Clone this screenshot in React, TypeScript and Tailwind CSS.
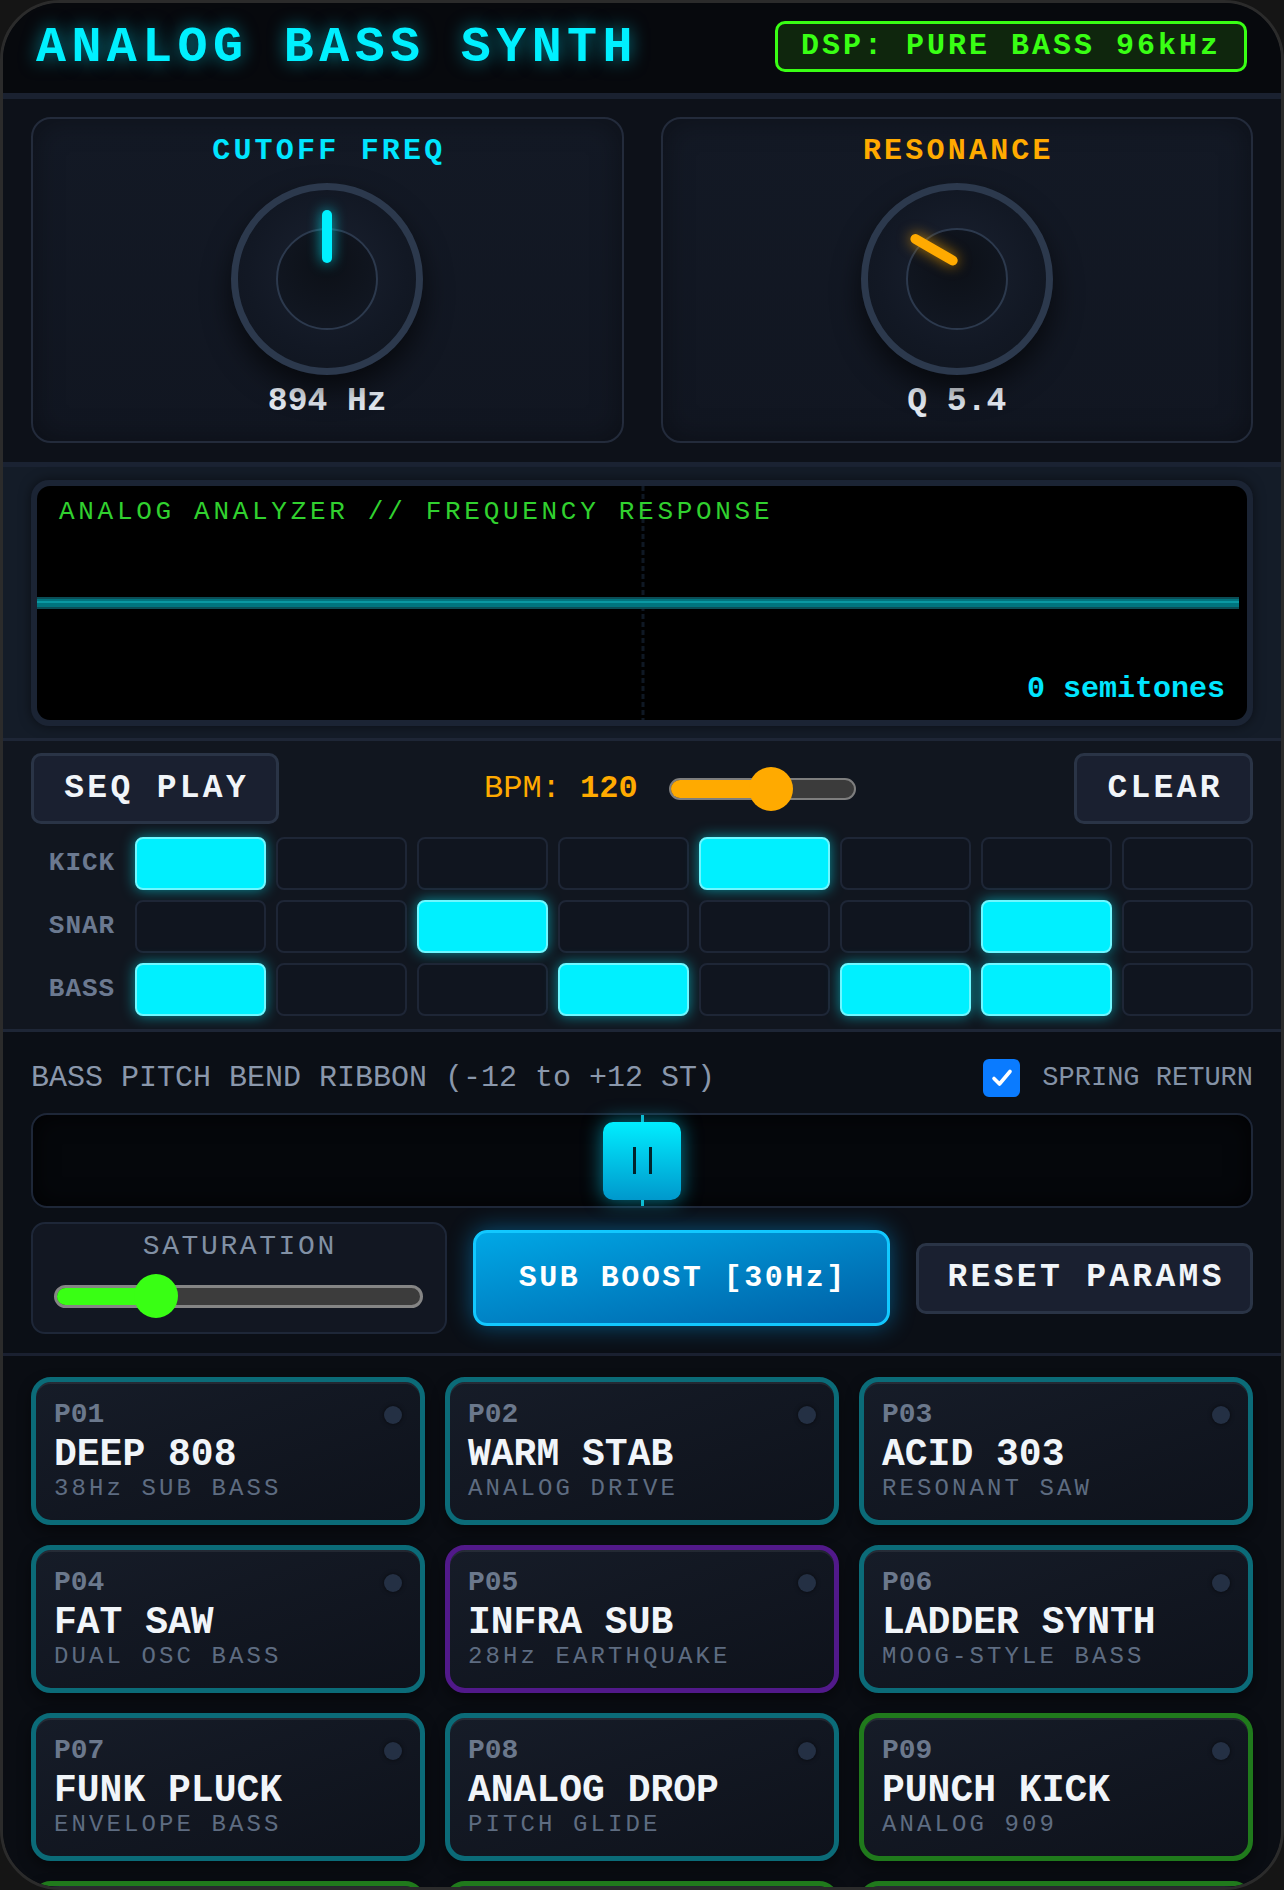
import React from "react";

type Tone = "teal" | "purple" | "green";

type Preset = {
  id: string;
  name: string;
  sub: string;
  tone: Tone;
};

const PRESETS: Preset[] = [
  { id: "P01", name: "DEEP 808", sub: "38Hz SUB BASS", tone: "teal" },
  { id: "P02", name: "WARM STAB", sub: "ANALOG DRIVE", tone: "teal" },
  { id: "P03", name: "ACID 303", sub: "RESONANT SAW", tone: "teal" },
  { id: "P04", name: "FAT SAW", sub: "DUAL OSC BASS", tone: "teal" },
  { id: "P05", name: "INFRA SUB", sub: "28Hz EARTHQUAKE", tone: "purple" },
  { id: "P06", name: "LADDER SYNTH", sub: "MOOG-STYLE BASS", tone: "teal" },
  { id: "P07", name: "FUNK PLUCK", sub: "ENVELOPE BASS", tone: "teal" },
  { id: "P08", name: "ANALOG DROP", sub: "PITCH GLIDE", tone: "teal" },
  { id: "P09", name: "PUNCH KICK", sub: "ANALOG 909", tone: "green" },
];

// next row of the bank, only its top edge is in view
const NEXT_ROW: Tone[] = ["green", "green", "green"];

const TONE_BORDER: Record<Tone, string> = {
  teal: "border-[#0b6b78]",
  purple: "border-[#51198a]",
  green: "border-[#207a1c]",
};

const PATTERN: { label: string; steps: number[] }[] = [
  { label: "KICK", steps: [1, 0, 0, 0, 1, 0, 0, 0] },
  { label: "SNAR", steps: [0, 0, 1, 0, 0, 0, 1, 0] },
  { label: "BASS", steps: [1, 0, 0, 1, 0, 1, 1, 0] },
];

const CARD =
  "h-[148px] rounded-[20px] border-[5px] bg-linear-to-br from-[#161c28] to-[#0e121b] shadow-[inset_0_2px_0_rgba(255,255,255,0.07),0_6px_14px_rgba(0,0,0,0.45)]";

const DARK_BTN =
  "h-[71px] rounded-[10px] border-[3px] border-[#2a3446] bg-[#1a2030] text-[33px] font-bold tracking-[3.3px] pl-[3.3px] text-[#f1f5f9]";

function Knob({
  label,
  value,
  labelClass,
  indicatorClass,
  rotateClass,
}: {
  label: string;
  value: string;
  labelClass: string;
  indicatorClass: string;
  rotateClass: string;
}) {
  return (
    <div className="flex-1 h-[326px] rounded-[20px] border-2 border-[#232b3b] bg-linear-to-b from-[#131925] to-[#111621] shadow-[inset_0_0_30px_rgba(0,0,0,0.35)] flex flex-col items-center pt-[15px]">
      <div className={`text-[30px] leading-[34px] font-bold tracking-[3.2px] pl-[3.2px] ${labelClass}`}>
        {label}
      </div>
      <div className="mt-[15px] relative w-[192px] h-[192px] rounded-full border-[7px] border-[#2c394d] bg-[radial-gradient(circle_at_50%_45%,#1a2130_0%,#121824_60%,#0f141d_100%)] shadow-[0_14px_28px_rgba(0,0,0,0.6)] flex items-center justify-center">
        <div className="w-[102px] h-[102px] rounded-full border-2 border-[#2c394d] bg-[radial-gradient(circle_at_50%_35%,#0c1017_0%,#131925_100%)]" />
        <div
          className={`absolute left-[84px] top-[20px] w-[10px] h-[53px] rounded-full origin-bottom ${rotateClass} ${indicatorClass}`}
        />
      </div>
      <div className="mt-[9px] text-[33px] leading-[36px] font-bold text-[#e2e8f0]">{value}</div>
    </div>
  );
}

function PresetCard({ p }: { p: Preset }) {
  return (
    <div className={`${CARD} ${TONE_BORDER[p.tone]} px-[18px] pt-[18px]`}>
      <div className="flex items-center justify-between">
        <span className="text-[28px] leading-[30px] font-bold text-[#6b788c]">{p.id}</span>
        <span className="w-[18px] h-[18px] rounded-full bg-[#243044] shadow-[0_0_4px_rgba(0,0,0,0.6)]" />
      </div>
      <div className="mt-[6px] text-[38px] leading-[38px] font-bold text-[#f1f5f9]">{p.name}</div>
      <div className="mt-[2px] text-[24px] leading-[26px] tracking-[3.1px] text-[#5e6c81]">{p.sub}</div>
    </div>
  );
}

export default function App() {
  return (
    <div className="min-h-screen bg-[#151515] font-['Liberation_Mono','Courier_New',monospace]">
      <div className="h-[1890px] rounded-[60px] border-[3px] border-[#2b2b2b] bg-[#0b0e14] overflow-hidden flex flex-col">
        {/* Header */}
        <header className="h-[96px] shrink-0 border-b-[6px] border-[#1a2130] bg-[#07090d] flex items-center justify-between pl-[33px] pr-[34px]">
          <h1 className="text-[50px] leading-[56px] font-bold tracking-[5.4px] text-[#00f0ff] [text-shadow:0_0_18px_rgba(0,229,255,0.55)]">
            ANALOG BASS SYNTH
          </h1>
          <div className="mb-[4px] rounded-[10px] border-[3px] border-[#39ff14] bg-[#0f260d] px-[23px] py-[6px] text-[30px] leading-[33px] font-bold tracking-[3px] text-[#39ff14]">
            DSP: PURE BASS 96kHz
          </div>
        </header>

        {/* Knobs */}
        <section className="shrink-0 bg-[#0d1119] px-[28px] pt-[18px] pb-[19px] flex gap-[37px]">
          <Knob
            label="CUTOFF FREQ"
            value="894 Hz"
            labelClass="text-[#00e5ff]"
            indicatorClass="bg-[#00f0ff] shadow-[0_0_14px_rgba(0,240,255,0.75)]"
            rotateClass="rotate-0"
          />
          <Knob
            label="RESONANCE"
            value="Q 5.4"
            labelClass="text-[#ffaa00]"
            indicatorClass="bg-[#ffaa00] shadow-[0_0_14px_rgba(255,170,0,0.75)]"
            rotateClass="rotate-[-60deg]"
          />
        </section>

        {/* Analyzer */}
        <section className="shrink-0 border-t-[5px] border-[#1a2232] bg-[#141c28] px-[28px] pt-[13px] pb-[12px]">
          <div className="rounded-[18px] bg-[#1b2434] p-[6px] shadow-[0_0_12px_rgba(0,0,0,0.5)]">
            <div className="relative h-[234px] rounded-[13px] bg-black overflow-hidden flex flex-col justify-between pl-[22px] pr-[22px] pt-[12px] pb-[14px]">
              <svg className="absolute inset-0" width="1210" height="234" viewBox="0 0 1210 234">
                <line x1="606" y1="0" x2="606" y2="234" stroke="#0f1824" strokeWidth="3" strokeDasharray="5 3" />
                <rect x="0" y="111" width="1202" height="12" fill="#00747e" />
                <rect x="0" y="111" width="1202" height="2" fill="#0b4d56" />
                <rect x="0" y="115" width="1202" height="2" fill="#0a98a2" />
                <rect x="0" y="121" width="1202" height="2" fill="#0b4d56" />
              </svg>
              <div className="relative text-[26px] leading-[28px] tracking-[3.7px] text-[#31d12f]">
                ANALOG ANALYZER // FREQUENCY RESPONSE
              </div>
              <div className="relative self-end text-[30px] leading-[34px] font-bold text-[#00e5ff]">
                0 semitones
              </div>
            </div>
          </div>
        </section>

        {/* Sequencer */}
        <section className="shrink-0 border-t-[3px] border-[#1e2636] bg-[#11161f] px-[28px] pt-[12px] pb-[13px]">
          <div className="flex items-center h-[71px]">
            <button className={`w-[248px] ${DARK_BTN}`}>SEQ PLAY</button>
            <div className="ml-[205px] flex items-center">
              <span className="text-[32px] leading-[36px] text-[#ffaa00]">
                BPM: <span className="font-bold">120</span>
              </span>
              <div className="ml-[31px] relative w-[187px] h-[22px] rounded-full border-2 border-[#7e7e7e] bg-[#3b3b3b]">
                <div className="absolute left-0 top-0 bottom-0 w-[101px] rounded-full bg-[#ffaa00]" />
                <div className="absolute left-[78px] top-[-13px] w-[44px] h-[44px] rounded-full bg-[#ffaa00]" />
              </div>
            </div>
            <button className={`ml-auto w-[179px] ${DARK_BTN}`}>CLEAR</button>
          </div>

          <div className="mt-[13px] grid grid-cols-[94px_repeat(8,minmax(0,1fr))] gap-[10px]">
            {PATTERN.map((row) => (
              <React.Fragment key={row.label}>
                <div className="h-[53px] flex items-center justify-center pl-[8px] text-[26px] font-bold tracking-[1px] text-[#6b7990]">
                  {row.label}
                </div>
                {row.steps.map((on, i) =>
                  on ? (
                    <div
                      key={i}
                      className="h-[53px] rounded-[8px] border-2 border-[#6ff7ff] bg-[#00f0ff] shadow-[0_0_14px_rgba(0,240,255,0.55)]"
                    />
                  ) : (
                    <div key={i} className="h-[53px] rounded-[8px] border-2 border-[#1e2636] bg-[#10151f]" />
                  )
                )}
              </React.Fragment>
            ))}
          </div>
        </section>

        {/* Ribbon + controls */}
        <section className="shrink-0 border-t-[3px] border-[#1e2636] bg-[#0b0f16] px-[28px] pt-[27px] pb-[19px]">
          <div className="h-[38px] flex items-center justify-between">
            <span className="text-[30px] leading-[34px] text-[#8a97ab]">BASS PITCH BEND RIBBON (-12 to +12 ST)</span>
            <div className="flex items-center gap-[22px]">
              <span className="w-[37px] h-[38px] rounded-[6px] bg-[#0a7bff] flex items-center justify-center">
                <svg width="24" height="24" viewBox="0 0 24 24">
                  <path d="M4 12.5 L9.5 18 L20 5.5" fill="none" stroke="#fff" strokeWidth="3.6" strokeLinecap="round" strokeLinejoin="round" />
                </svg>
              </span>
              <span className="text-[27px] leading-[30px] text-[#8492a6]">SPRING RETURN</span>
            </div>
          </div>

          <div className="mt-[16px] relative h-[95px] rounded-[16px] border-2 border-[#1e2738] bg-[#05070b] shadow-[inset_0_0_24px_rgba(0,0,0,0.8)] flex items-center justify-center">
            <div className="absolute top-0 bottom-0 left-[calc(50%-1px)] w-[3px] bg-[#0fb6c9]" />
            <div className="relative w-[78px] h-[78px] rounded-[10px] bg-linear-to-b from-[#00eeff] to-[#0098cc] shadow-[0_0_20px_rgba(0,220,255,0.55)] flex items-center justify-center gap-[13px]">
              <span className="w-[3px] h-[27px] bg-[#02232b]" />
              <span className="w-[3px] h-[27px] bg-[#02232b]" />
            </div>
          </div>

          <div className="mt-[14px] h-[112px] flex items-center gap-[26px]">
            <div className="w-[416px] shrink-0 h-[112px] rounded-[14px] border-2 border-[#1e2738] bg-[#121722] pt-[8px] pl-[21px] pr-[22px]">
              <div className="text-center text-[28px] leading-[30px] tracking-[2.6px] pl-[2.6px] text-[#8190a4]">
                SATURATION
              </div>
              <div className="mt-[12px] h-[44px] flex items-center">
                <div className="relative w-full h-[23px] rounded-full border-[3px] border-[#858585] bg-[#3c3c3c]">
                  <div className="absolute left-0 top-0 bottom-0 w-[102px] rounded-full bg-[#39ff14]" />
                  <div className="absolute left-[77px] top-[-13.5px] w-[44px] h-[44px] rounded-full bg-[#39ff14]" />
                </div>
              </div>
            </div>
            <button className="w-[417px] shrink-0 h-[96px] rounded-[14px] border-[3px] border-[#12c8ff] bg-linear-to-br from-[#00a8e6] to-[#005fa5] shadow-[0_0_24px_rgba(0,170,255,0.45)] text-[30px] font-bold tracking-[2.5px] pl-[2.5px] text-white">
              SUB BOOST [30Hz]
            </button>
            <button className={`flex-1 ${DARK_BTN}`}>RESET PARAMS</button>
          </div>
        </section>

        {/* Presets */}
        <section className="flex-1 border-t-[3px] border-[#1a2030] bg-[#0a0d13] px-[28px] pt-[21px]">
          <div className="grid grid-cols-3 gap-[20px]">
            {PRESETS.map((p) => (
              <PresetCard key={p.id} p={p} />
            ))}
            {NEXT_ROW.map((t, i) => (
              <div key={i} className={`${CARD} ${TONE_BORDER[t]}`} />
            ))}
          </div>
        </section>
      </div>
    </div>
  );
}
